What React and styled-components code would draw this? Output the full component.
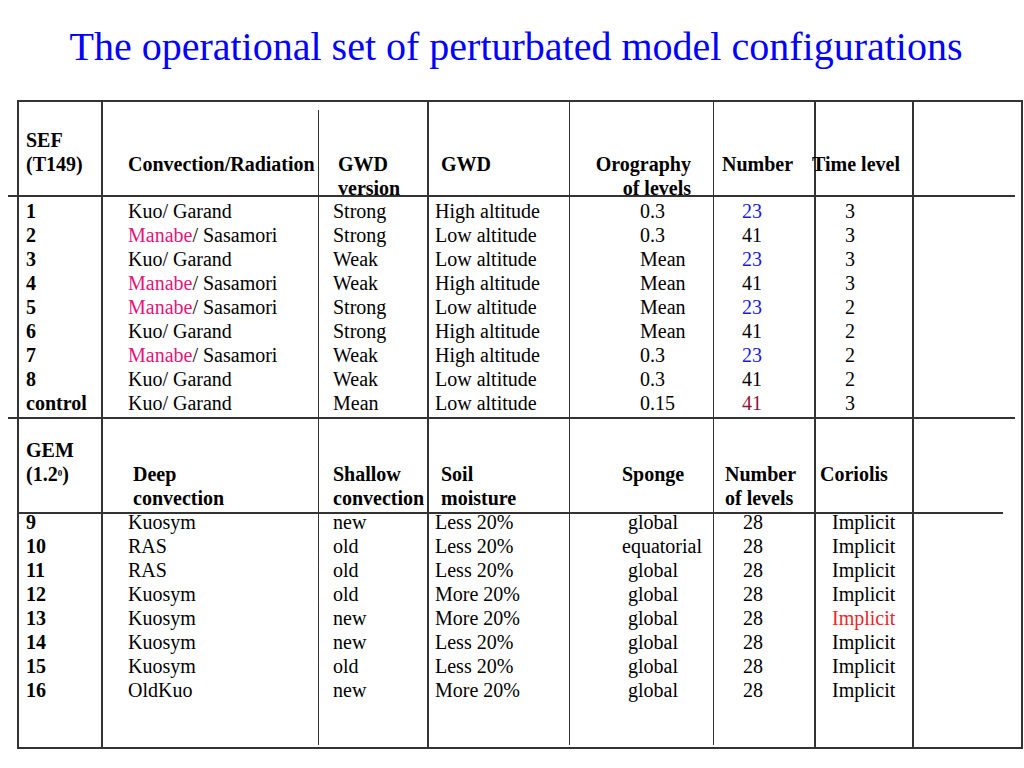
import React from 'react';
import styled, { createGlobalStyle } from 'styled-components';

const Global = createGlobalStyle`
  html, body { margin: 0; padding: 0; background: #fff; }
  body { font-family: "Liberation Serif", "Times New Roman", serif; color: #000; }
`;

const Slide = styled.div`
  width: 1024px;
  height: 768px;
  overflow: hidden;
`;

const Title = styled.h1`
  margin: 0;
  height: 100px;
  box-sizing: border-box;
  padding: 25px 0 0 8px;
  font-weight: normal;
  font-size: 40px;
  line-height: 44px;
  text-align: center;
  color: #0000ff;
`;

const Table = styled.div`
  margin-left: 17px;
  width: 1002px;
  border: 2px solid #333;
  display: grid;
  grid-template-columns: 82px 217px 109px 142px 144px 101px 98px 109px;
  grid-template-rows: 93px 2px 220px 2px 93px 2px 233px;
`;

const Divider = styled.div`
  grid-column: 1 / -1;
  background: #333;
  margin-left: ${p => p.$left}px;
  margin-right: ${p => p.$right}px;
`;

const lineBg = ({ $line, $gapTop = 0, $gapBottom = 0 }) => {
  if (!$line) return 'none';
  const w = $line === 'thick' ? 2 : 1;
  return `linear-gradient(#333, #333) no-repeat left 0 top ${$gapTop}px / ${w}px calc(100% - ${$gapTop + $gapBottom}px)`;
};

const Cell = styled.div`
  background: ${lineBg};
  font-size: 20px;
  line-height: 24px;
  white-space: nowrap;
  min-width: 0;
`;

const Stack = styled.div`
  margin-top: ${p => p.$top || 0}px;
  margin-left: ${p => p.$indent || 0}px;
  margin-right: ${p => p.$right || 0}px;
  text-align: ${p => p.$align || 'left'};
`;

const Line = styled.div`
  height: 24px;
  font-weight: ${p => (p.$bold ? 700 : 400)};
  margin-left: ${p => p.$dx || 0}px;
`;

const Tint = styled.span`
  color: ${p => p.$c};
`;

const Sup = styled.span`
  font-size: 9px;
  vertical-align: 5px;
  line-height: 0;
`;

const PINK = '#e5147a';
const BLUE = '#1a1ad8';
const MAROON = '#8e1538';
const RED = '#e8262a';

// column line styles (index 0 uses the table's own border)
const LINES = [null, 'thick', 'thin', 'thick', 'thin', 'thin', 'thick', 'thick'];

const manabe = (
  <>
    <Tint $c={PINK}>Manabe</Tint>/ Sasamori
  </>
);
const kuo = 'Kuo/ Garand';
const blue23 = <Tint $c={BLUE}>23</Tint>;

const sefRows = [
  ['1', kuo, 'Strong', 'High altitude', '0.3', blue23, '3'],
  ['2', manabe, 'Strong', 'Low altitude', '0.3', '41', '3'],
  ['3', kuo, 'Weak', 'Low altitude', 'Mean', blue23, '3'],
  ['4', manabe, 'Weak', 'High altitude', 'Mean', '41', '3'],
  ['5', manabe, 'Strong', 'Low altitude', 'Mean', blue23, '2'],
  ['6', kuo, 'Strong', 'High altitude', 'Mean', '41', '2'],
  ['7', manabe, 'Weak', 'High altitude', '0.3', blue23, '2'],
  ['8', kuo, 'Weak', 'Low altitude', '0.3', '41', '2'],
  ['control', kuo, 'Mean', 'Low altitude', '0.15', <Tint $c={MAROON}>41</Tint>, '3'],
];

const implicit = 'Implicit';
const gemRows = [
  ['9', 'Kuosym', 'new', 'Less 20%', 'global', '28', implicit],
  ['10', 'RAS', 'old', 'Less 20%', { t: 'equatorial', dx: -6 }, '28', implicit],
  ['11', 'RAS', 'old', 'Less 20%', 'global', '28', implicit],
  ['12', 'Kuosym', 'old', 'More 20%', 'global', '28', implicit],
  ['13', 'Kuosym', 'new', 'More 20%', 'global', '28', <Tint $c={RED}>Implicit</Tint>],
  ['14', 'Kuosym', 'new', 'Less 20%', 'global', '28', implicit],
  ['15', 'Kuosym', 'old', 'Less 20%', 'global', '28', implicit],
  ['16', 'OldKuo', 'new', 'More 20%', 'global', '28', implicit],
];

const toColumns = rows =>
  rows[0].map((_, c) => rows.map(r => r[c]));

const sections = [
  {
    top: 26,
    bold: true,
    cols: [
      ['SEF', '(T149)'],
      [null, 'Convection/Radiation'],
      [null, 'GWD', 'version'],
      [null, 'GWD'],
      [null, 'Orography', 'of levels'],
      [null, 'Number'],
      [null, 'Time level'],
      [],
    ],
    indents: [7, 27, 20, 14, 0, 9, -2, 0],
    align: [null, null, null, null, { align: 'right', right: 22 }, null, null, null],
    gapTop: [0, 0, 8, 0, 0, 0, 0, 0],
  },
  {
    top: 2,
    cols: [...toColumns(sefRows), []],
    boldFirst: true,
    indents: [7, 27, 15, 8, 71, 29, 31, 0],
  },
  {
    top: 19,
    bold: true,
    cols: [
      ['GEM', <>(1.2<Sup>0</Sup>)</>],
      [null, 'Deep', 'convection'],
      [null, 'Shallow', 'convection'],
      [null, 'Soil', 'moisture'],
      [null, 'Sponge'],
      [null, 'Number', 'of levels'],
      [null, 'Coriolis'],
      [],
    ],
    indents: [7, 32, 15, 14, 53, 12, 6, 0],
  },
  {
    top: -4,
    cols: [...toColumns(gemRows), []],
    boldFirst: true,
    indents: [7, 27, 15, 8, 59, 30, 18, 0],
    gapBottom: [0, 0, 2, 0, 2, 2, 0, 0],
  },
];

const dividers = [
  { left: -11, right: 6 },
  { left: -11, right: 6 },
  { left: -1, right: 18 },
];

function Section({ s }) {
  return s.cols.map((lines, c) => {
    const a = (s.align && s.align[c]) || {};
    return (
      <Cell
        key={c}
        $line={LINES[c]}
        $gapTop={s.gapTop ? s.gapTop[c] : 0}
        $gapBottom={s.gapBottom ? s.gapBottom[c] : 0}
      >
        <Stack $top={s.top} $indent={s.indents[c]} $align={a.align} $right={a.right}>
          {lines.map((l, i) => {
            const obj = l && typeof l === 'object' && 't' in l ? l : null;
            return (
              <Line key={i} $bold={s.bold || (s.boldFirst && c === 0)} $dx={obj ? obj.dx : 0}>
                {obj ? obj.t : l}
              </Line>
            );
          })}
        </Stack>
      </Cell>
    );
  });
}

export default function App() {
  return (
    <>
      <Global />
      <Slide>
        <Title>The operational set of perturbated model configurations</Title>
        <Table>
          <Section s={sections[0]} />
          <Divider $left={dividers[0].left} $right={dividers[0].right} />
          <Section s={sections[1]} />
          <Divider $left={dividers[1].left} $right={dividers[1].right} />
          <Section s={sections[2]} />
          <Divider $left={dividers[2].left} $right={dividers[2].right} />
          <Section s={sections[3]} />
        </Table>
      </Slide>
    </>
  );
}
